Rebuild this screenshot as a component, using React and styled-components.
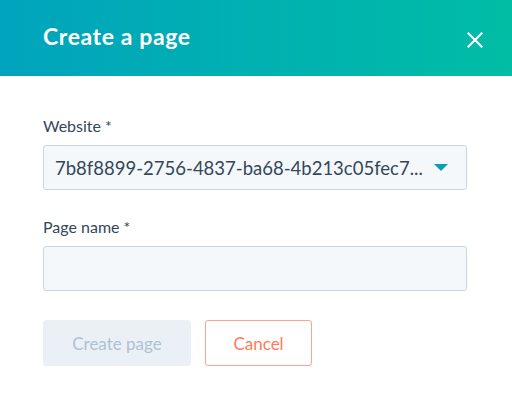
import React from "react";
import styled, { createGlobalStyle } from "styled-components";

const Global = createGlobalStyle`
  html, body { margin: 0; padding: 0; background: #ffffff; }
  body { font-family: Lato, "Noto Sans", sans-serif; }
  * { box-sizing: border-box; }
`;

const Dialog = styled.div`
  width: 512px;
  height: 393px;
  background: #ffffff;
  display: flex;
  flex-direction: column;
`;

const Header = styled.header`
  height: 76px;
  flex: none;
  display: flex;
  align-items: flex-start;
  justify-content: space-between;
  padding: 0 29px 0 43px;
  background: linear-gradient(to right, #00a4bd, #00bda5);
`;

const Title = styled.h1`
  margin: 22px 0 0;
  font-family: Lato, sans-serif;
  font-weight: 700;
  font-size: 23px;
  line-height: 28px;
  letter-spacing: 0.6px;
  color: #ffffff;
`;

const CloseButton = styled.button`
  margin-top: 32px;
  width: 16px;
  height: 16px;
  padding: 0;
  border: 0;
  background: transparent;
  display: flex;
  cursor: pointer;
`;

const Body = styled.div`
  padding: 40px 45px 0 43px;
  display: flex;
  flex-direction: column;
`;

const Field = styled.div`
  display: flex;
  flex-direction: column;
  margin-bottom: 27px;
`;

const Label = styled.label`
  font-family: Lato, sans-serif;
  font-size: 16px;
  line-height: 20px;
  color: #33475b;
  margin-bottom: 9px;
`;

const Box = styled.div`
  height: 45px;
  border: 1px solid #cbd6e2;
  border-radius: 3px;
  background: #f5f8fa;
  display: flex;
  align-items: center;
  padding: 0 18px 0 11px;
  font-family: Lato, sans-serif;
  font-size: 18.5px;
  color: #33475b;
`;

const SelectText = styled.span`
  white-space: nowrap;
`;

const Caret = styled.span`
  margin-left: auto;
  width: 0;
  height: 0;
  border-left: 7.5px solid transparent;
  border-right: 7.5px solid transparent;
  border-top: 7.5px solid #0b9fb7;
`;

const Actions = styled.div`
  display: flex;
  gap: 14px;
  margin-top: 2px;
`;

const Button = styled.button`
  height: 46px;
  width: ${(p) => p.$w}px;
  padding: 0;
  border-radius: 3px;
  font-family: Lato, sans-serif;
  font-size: 17px;
  background: ${(p) => (p.$disabled ? "#eaf0f6" : "#ffffff")};
  color: ${(p) => (p.$disabled ? "#b0c1d4" : "#ff7a59")};
  border: 1px solid ${(p) => (p.$disabled ? "#eaf0f6" : "#ffa38c")};
  cursor: ${(p) => (p.$disabled ? "default" : "pointer")};
`;

export default function App() {
  return (
    <>
      <Global />
      <Dialog>
        <Header>
          <Title>Create a page</Title>
          <CloseButton aria-label="Close">
            <svg width="16" height="16" viewBox="0 0 16 16">
              <path d="M0.7 0.7 L15.3 15.3 M15.3 0.7 L0.7 15.3" stroke="#ffffff" strokeWidth="2.1" />
            </svg>
          </CloseButton>
        </Header>
        <Body>
          <Field>
            <Label>Website *</Label>
            <Box>
              <SelectText>7b8f8899-2756-4837-ba68-4b213c05fec7...</SelectText>
              <Caret />
            </Box>
          </Field>
          <Field>
            <Label>Page name *</Label>
            <Box />
          </Field>
          <Actions>
            <Button $disabled $w={148}>Create page</Button>
            <Button $w={107}>Cancel</Button>
          </Actions>
        </Body>
      </Dialog>
    </>
  );
}
